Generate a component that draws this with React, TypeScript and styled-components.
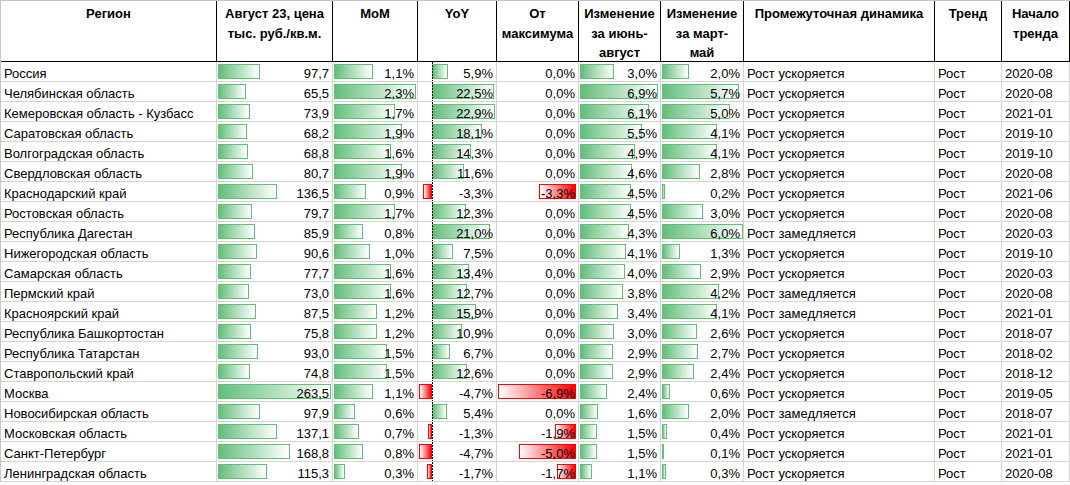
import styled, { createGlobalStyle } from "styled-components";

type RowType = {
    region: string;
    price: number;
    mom: number;
    yoy: number;
    fromMax: number;
    junAug: number;
    marMay: number;
    dynamics: string;
    trend: string;
    start: string;
}

type ScaleType = {
    min: number;
    max: number;
    width: number;
}

const rows: Array<RowType> = [
    {region: "Россия", price: 97.7, mom: 1.1, yoy: 5.9, fromMax: 0, junAug: 3.0, marMay: 2.0, dynamics: "Рост ускоряется", trend: "Рост", start: "2020-08"},
    {region: "Челябинская область", price: 65.5, mom: 2.3, yoy: 22.5, fromMax: 0, junAug: 6.9, marMay: 5.7, dynamics: "Рост ускоряется", trend: "Рост", start: "2020-08"},
    {region: "Кемеровская область - Кузбасс", price: 73.9, mom: 1.7, yoy: 22.9, fromMax: 0, junAug: 6.1, marMay: 5.0, dynamics: "Рост ускоряется", trend: "Рост", start: "2021-01"},
    {region: "Саратовская область", price: 68.2, mom: 1.9, yoy: 18.1, fromMax: 0, junAug: 5.5, marMay: 4.1, dynamics: "Рост ускоряется", trend: "Рост", start: "2019-10"},
    {region: "Волгоградская область", price: 68.8, mom: 1.6, yoy: 14.3, fromMax: 0, junAug: 4.9, marMay: 4.1, dynamics: "Рост ускоряется", trend: "Рост", start: "2019-10"},
    {region: "Свердловская область", price: 80.7, mom: 1.9, yoy: 11.6, fromMax: 0, junAug: 4.6, marMay: 2.8, dynamics: "Рост ускоряется", trend: "Рост", start: "2020-08"},
    {region: "Краснодарский край", price: 136.5, mom: 0.9, yoy: -3.3, fromMax: -3.3, junAug: 4.5, marMay: 0.2, dynamics: "Рост ускоряется", trend: "Рост", start: "2021-06"},
    {region: "Ростовская область", price: 79.7, mom: 1.7, yoy: 12.3, fromMax: 0, junAug: 4.5, marMay: 3.0, dynamics: "Рост ускоряется", trend: "Рост", start: "2020-08"},
    {region: "Республика Дагестан", price: 85.9, mom: 0.8, yoy: 21.0, fromMax: 0, junAug: 4.3, marMay: 6.0, dynamics: "Рост замедляется", trend: "Рост", start: "2020-03"},
    {region: "Нижегородская область", price: 90.6, mom: 1.0, yoy: 7.5, fromMax: 0, junAug: 4.1, marMay: 1.3, dynamics: "Рост ускоряется", trend: "Рост", start: "2019-10"},
    {region: "Самарская область", price: 77.7, mom: 1.6, yoy: 13.4, fromMax: 0, junAug: 4.0, marMay: 2.9, dynamics: "Рост ускоряется", trend: "Рост", start: "2020-03"},
    {region: "Пермский край", price: 73.0, mom: 1.6, yoy: 12.7, fromMax: 0, junAug: 3.8, marMay: 4.2, dynamics: "Рост замедляется", trend: "Рост", start: "2020-08"},
    {region: "Красноярский край", price: 87.5, mom: 1.2, yoy: 15.9, fromMax: 0, junAug: 3.4, marMay: 4.1, dynamics: "Рост замедляется", trend: "Рост", start: "2021-01"},
    {region: "Республика Башкортостан", price: 75.8, mom: 1.2, yoy: 10.9, fromMax: 0, junAug: 3.0, marMay: 2.6, dynamics: "Рост ускоряется", trend: "Рост", start: "2018-07"},
    {region: "Республика Татарстан", price: 93.0, mom: 1.5, yoy: 6.7, fromMax: 0, junAug: 2.9, marMay: 2.7, dynamics: "Рост ускоряется", trend: "Рост", start: "2018-02"},
    {region: "Ставропольский край", price: 74.8, mom: 1.5, yoy: 12.6, fromMax: 0, junAug: 2.9, marMay: 2.4, dynamics: "Рост ускоряется", trend: "Рост", start: "2018-12"},
    {region: "Москва", price: 263.5, mom: 1.1, yoy: -4.7, fromMax: -6.9, junAug: 2.4, marMay: 0.6, dynamics: "Рост ускоряется", trend: "Рост", start: "2019-05"},
    {region: "Новосибирская область", price: 97.9, mom: 0.6, yoy: 5.4, fromMax: 0, junAug: 1.6, marMay: 2.0, dynamics: "Рост замедляется", trend: "Рост", start: "2018-07"},
    {region: "Московская область", price: 137.1, mom: 0.7, yoy: -1.3, fromMax: -1.9, junAug: 1.5, marMay: 0.4, dynamics: "Рост ускоряется", trend: "Рост", start: "2021-01"},
    {region: "Санкт-Петербург", price: 168.8, mom: 0.8, yoy: -4.7, fromMax: -5.0, junAug: 1.5, marMay: 0.1, dynamics: "Рост ускоряется", trend: "Рост", start: "2021-01"},
    {region: "Ленинградская область", price: 115.3, mom: 0.3, yoy: -1.7, fromMax: -1.7, junAug: 1.1, marMay: 0.3, dynamics: "Рост ускоряется", trend: "Рост", start: "2020-08"},
];

const scales = {
    price: {min: 0, max: 263.5, width: 113},
    mom: {min: 0, max: 2.3, width: 82},
    yoy: {min: -4.7, max: 22.9, width: 76},
    fromMax: {min: -6.9, max: 0, width: 78},
    junAug: {min: 0, max: 6.9, width: 78},
    marMay: {min: 0, max: 6.0, width: 81},
}

const num = (v: number) => v.toFixed(1).replace(".", ",");
const pct = (v: number) => num(v) + "%";

const BarCell = (props: { value: number; scale: ScaleType; text: string }) => {
    const {value, scale} = props;
    const span = scale.max - scale.min;
    const axis = Math.round((-scale.min / span) * scale.width);
    const len = Math.max(1, Math.round((Math.abs(value) / span) * scale.width));
    const left = value > 0 ? 1 + axis : 1 + axis - len;
    return (
        <Cell $align="right">
            {value !== 0 && <Bar $negative={value < 0} style={{left: left, width: len}}/>}
            {scale.min < 0 && scale.max > 0 && <Axis style={{left: 1 + axis}}/>}
            <CellText>{props.text}</CellText>
        </Cell>
    );
};

export default function App() {
    return (
        <>
            <GlobalStyle/>
            <Sheet>
                <HeadCell>Регион</HeadCell>
                <HeadCell>Август 23, цена<br/>тыс. руб./кв.м.</HeadCell>
                <HeadCell>MoM</HeadCell>
                <HeadCell>YoY</HeadCell>
                <HeadCell>От<br/>максимума</HeadCell>
                <HeadCell>Изменение<br/>за июнь-<br/>август</HeadCell>
                <HeadCell>Изменение<br/>за март-<br/>май</HeadCell>
                <HeadCell>Промежуточная динамика</HeadCell>
                <HeadCell>Тренд</HeadCell>
                <HeadCell>Начало<br/>тренда</HeadCell>
                {rows.map((r, index) => (
                    <Row key={index}>
                        <Cell $align="left">{r.region}</Cell>
                        <BarCell value={r.price} scale={scales.price} text={num(r.price)}/>
                        <BarCell value={r.mom} scale={scales.mom} text={pct(r.mom)}/>
                        <BarCell value={r.yoy} scale={scales.yoy} text={pct(r.yoy)}/>
                        <BarCell value={r.fromMax} scale={scales.fromMax} text={pct(r.fromMax)}/>
                        <BarCell value={r.junAug} scale={scales.junAug} text={pct(r.junAug)}/>
                        <BarCell value={r.marMay} scale={scales.marMay} text={pct(r.marMay)}/>
                        <Cell $align="left">{r.dynamics}</Cell>
                        <Cell $align="left">{r.trend}</Cell>
                        <Cell $align="left">{r.start}</Cell>
                    </Row>
                ))}
            </Sheet>
        </>
    );
}

const GlobalStyle = createGlobalStyle`
    body {
        margin: 0;
        background: #fff;
        font-family: "Liberation Sans", Arial, sans-serif;
        color: #000;
    }
`

const Sheet = styled.div`
    display: grid;
    grid-template-columns: 216px 116px 85px 79px 82px 82px 83px 191px 67px 68px;
    grid-template-rows: 61px;
    grid-auto-rows: 20px;
    width: 1069px;
    border-top: 1px solid #c6c6c6;
    border-left: 1px solid #c6c6c6;
    font-size: 13px;
`

const HeadCell = styled.div`
    box-sizing: border-box;
    border-right: 1px solid #000;
    border-bottom: 1px solid #000;
    padding-top: 3px;
    font-weight: bold;
    text-align: center;
    line-height: 19.5px;
    overflow: hidden;
`

const Row = styled.div`
    display: contents;
`

const Cell = styled.div<{ $align: "left" | "right" }>`
    position: relative;
    box-sizing: border-box;
    height: 20px;
    border-right: 1px solid #d4d4d4;
    border-bottom: 1px solid #d4d4d4;
    padding: 2px 3px 0 3px;
    line-height: 19px;
    white-space: nowrap;
    overflow: hidden;
    text-align: ${props => props.$align};
`

const CellText = styled.span`
    position: relative;
    z-index: 1;
`

const Bar = styled.div<{ $negative: boolean }>`
    position: absolute;
    top: 2px;
    height: 15px;
    box-sizing: border-box;
    border: 1px solid ${props => props.$negative ? "#ff0000" : "#63be7b"};
    background: ${props => props.$negative
            ? "linear-gradient(to left, #ff0000, #ffffff)"
            : "linear-gradient(to right, #63be7b, #ffffff)"};
`

const Axis = styled.div`
    position: absolute;
    top: 0;
    bottom: 0;
    width: 1px;
    background: repeating-linear-gradient(to bottom, #000 0 2px, transparent 2px 3px);
`
